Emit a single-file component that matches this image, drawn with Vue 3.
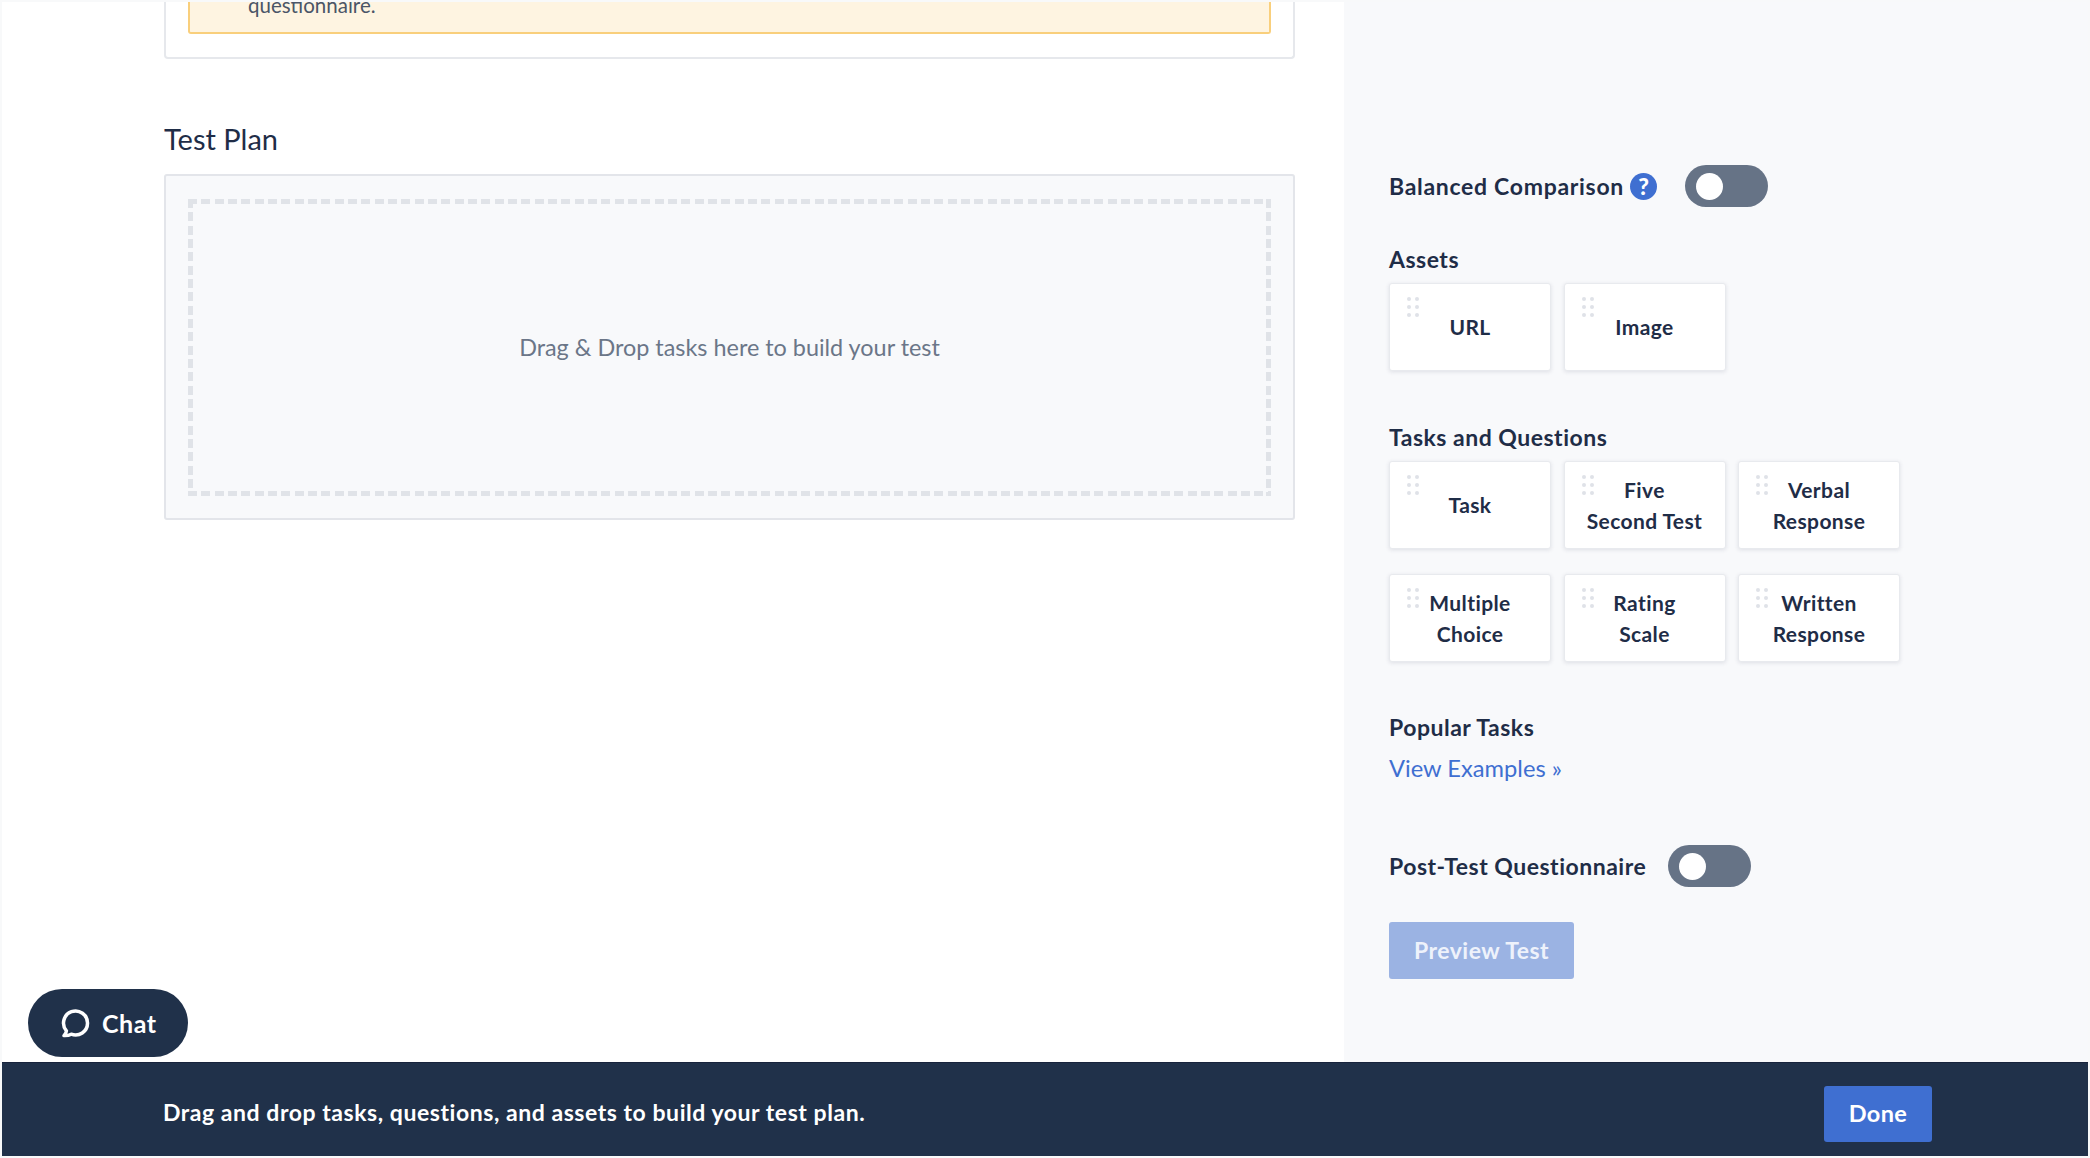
<script setup>
const assets = [['URL'], ['Image']]
const tasks = [
  ['Task'],
  ['Five', 'Second Test'],
  ['Verbal', 'Response'],
  ['Multiple', 'Choice'],
  ['Rating', 'Scale'],
  ['Written', 'Response']
]
</script>

<template>
  <div class="page">
    <div class="main">
      <section class="left">
        <div class="intro-card">
          <div class="alert"><span class="alert-text">questionnaire.</span></div>
        </div>
        <h2 class="plan-title">Test Plan</h2>
        <div class="plan-card">
          <div class="dropzone">Drag &amp; Drop tasks here to build your test</div>
        </div>
      </section>

      <aside class="side">
        <div class="toggle-row balanced">
          <span class="label">Balanced Comparison</span>
          <span class="help">?</span>
          <span class="toggle t-balanced"><i class="knob"></i></span>
        </div>

        <h3 class="label assets-title">Assets</h3>
        <div class="tiles">
          <div v-for="t in assets" :key="t[0]" class="tile">
            <span class="grip"><i v-for="n in 6" :key="n"></i></span>
            <span v-for="l in t" :key="l" class="tile-line">{{ l }}</span>
          </div>
        </div>

        <h3 class="label tasks-title">Tasks and Questions</h3>
        <div class="tiles">
          <div v-for="t in tasks" :key="t.join()" class="tile">
            <span class="grip"><i v-for="n in 6" :key="n"></i></span>
            <span v-for="l in t" :key="l" class="tile-line">{{ l }}</span>
          </div>
        </div>

        <h3 class="label popular-title">Popular Tasks</h3>
        <a class="examples">View Examples »</a>

        <div class="toggle-row post">
          <span class="label">Post-Test Questionnaire</span>
          <span class="toggle t-post"><i class="knob"></i></span>
        </div>

        <button class="preview">Preview Test</button>
      </aside>
    </div>

    <footer class="bar">
      <span class="bar-text">Drag and drop tasks, questions, and assets to build your test plan.</span>
      <button class="done">Done</button>
    </footer>

    <button class="chat">
      <svg width="32" height="32" viewBox="0 0 32 32" fill="none" stroke="#fff" stroke-width="3.500" stroke-linecap="round" stroke-linejoin="round">
        <path d="M6.400 23.800A12 12 0 1 1 11.200 27.200C9 28.400 6.500 28.700 4 28.600 5.500 27 6.300 25.500 6.400 23.800Z" />
      </svg>
      <span>Chat</span>
    </button>
  </div>
</template>

<style scoped>
.page {
  position: relative;
  box-sizing: border-box;
  width: 2090px;
  height: 1158px;
  padding: 2px;
  overflow: hidden;
  display: flex;
  flex-direction: column;
  font-family: "Lato", "Open Sans", sans-serif;
  color: #1f2d47;
  background: #f8f9fa;
}
.main {
  flex: 1;
  display: flex;
  min-height: 0;
  background: #fff;
}
.left {
  box-sizing: border-box;
  width: 1342px;
  padding-left: 162px;
}
.intro-card {
  box-sizing: border-box;
  width: 1131px;
  height: 57px;
  padding: 0 22px;
  background: #fff;
  border: 2px solid #e6e8ec;
  border-top: 0;
  border-radius: 0 0 4px 4px;
}
.alert {
  box-sizing: border-box;
  height: 32px;
  padding-left: 58px;
  background: #fef4e1;
  border: 2px solid #f9cf7c;
  border-top: 0;
  border-radius: 0 0 3px 3px;
  overflow: hidden;
}
.alert-text {
  display: block;
  margin-top: -9px;
  font-size: 20.500px;
  line-height: 24px;
  color: #4a5568;
}
.plan-title {
  margin: 45px 0 0;
  height: 70px;
  font-size: 29px;
  font-weight: 400;
  line-height: 70px;
  color: #1f2d47;
}
.plan-card {
  box-sizing: border-box;
  width: 1131px;
  height: 346px;
  padding: 23px 22px;
  background: #f8f9fb;
  border: 2px solid #e3e5ea;
  border-radius: 3px;
}
.dropzone {
  box-sizing: border-box;
  height: 297px;
  padding-bottom: 2px;
  display: flex;
  align-items: center;
  justify-content: center;
  background-image:
    repeating-linear-gradient(90deg, #e0e3e8 0 9px, transparent 9px 13.330px),
    repeating-linear-gradient(90deg, #e0e3e8 0 9px, transparent 9px 13.330px),
    repeating-linear-gradient(180deg, #e0e3e8 0 9px, transparent 9px 13.330px),
    repeating-linear-gradient(180deg, #e0e3e8 0 9px, transparent 9px 13.330px);
  background-size: 100% 5px, 100% 5px, 5px 100%, 5px 100%;
  background-position: top left, bottom left, top left, top right;
  background-repeat: no-repeat;
  font-size: 23.400px;
  color: #6b7688;
}
.side {
  flex: 1;
  box-sizing: border-box;
  padding: 0 0 0 45px;
  background: #f8f9fb;
}
.label {
  font-size: 23px;
  font-weight: 700;
  letter-spacing: 0.500px;
  color: #1f2d47;
}
h3.label {
  margin: 0;
  line-height: 28px;
}
.toggle-row {
  display: flex;
  align-items: center;
}
.balanced {
  height: 42px;
  margin-top: 163px;
}
.balanced .label {
  letter-spacing: 0.700px;
}
.help {
  flex: none;
  width: 27px;
  height: 27px;
  margin-left: 6px;
  border-radius: 50%;
  background: #3f6fd1;
  color: #fff;
  font-size: 23px;
  font-weight: 900;
  line-height: 27px;
  text-align: center;
}
.toggle {
  flex: none;
  display: flex;
  align-items: center;
  box-sizing: border-box;
  width: 83px;
  height: 42px;
  padding-left: 11px;
  border-radius: 21px;
  background: #667386;
}
.knob {
  width: 27px;
  height: 27px;
  border-radius: 50%;
  background: #fff;
}
.t-balanced { margin-left: 28px; }
.t-post { margin-left: 22px; }
.assets-title { margin-top: 38px !important; }
.tiles {
  display: grid;
  grid-template-columns: repeat(3, 162px);
  column-gap: 12.500px;
  row-gap: 25px;
  margin-top: 10px;
}
.tile {
  position: relative;
  box-sizing: border-box;
  height: 88px;
  padding-bottom: 1px;
  display: flex;
  flex-direction: column;
  align-items: center;
  justify-content: center;
  background: #fff;
  border: 1px solid #e8eaee;
  border-radius: 3px;
  box-shadow: 0 1px 4px rgba(31, 45, 71, 0.12);
}
.tile-line {
  font-size: 21px;
  font-weight: 700;
  letter-spacing: 0.400px;
  line-height: 31px;
  color: #1f2d47;
}
.grip {
  position: absolute;
  left: 17px;
  top: 13px;
  display: grid;
  grid-template-columns: repeat(2, 4px);
  column-gap: 4px;
  row-gap: 4px;
}
.grip i {
  width: 4px;
  height: 4px;
  border-radius: 50%;
  background: #dfe2e8;
}
.tasks-title { margin-top: 52px !important; }
.popular-title { margin-top: 51px !important; }
.examples {
  display: block;
  margin-top: 13px;
  font-size: 23.700px;
  line-height: 28px;
  color: #3f6fd1;
}
.post {
  height: 42px;
  margin-top: 63px;
}
button {
  border: 0;
  font-family: inherit;
}
.preview {
  display: block;
  width: 185px;
  height: 57px;
  margin-top: 35px;
  padding-bottom: 3px;
  border-radius: 3px;
  background: #9bb3e3;
  color: #eef2fb;
  font-size: 23px;
  font-weight: 700;
  letter-spacing: 0.500px;
}
.bar {
  flex: none;
  box-sizing: border-box;
  height: 94px;
  display: flex;
  align-items: center;
  justify-content: space-between;
  padding: 8px 156px 0 161px;
  background: #20314a;
  border-top: 1px solid #17233c;
}
.bar-text {
  margin-bottom: 3px;
  font-size: 23px;
  font-weight: 700;
  letter-spacing: 0.550px;
  color: #fff;
}
.done {
  width: 108px;
  height: 56px;
  padding-bottom: 2px;
  border-radius: 3px;
  background: #3f6fd1;
  color: #fff;
  font-size: 23.500px;
  font-weight: 700;
  letter-spacing: 0.400px;
}
.chat {
  position: absolute;
  left: 28px;
  top: 989px;
  width: 160px;
  height: 68px;
  display: flex;
  align-items: center;
  gap: 10px;
  padding: 0 0 0 32px;
  border-radius: 34px;
  background: #20314a;
  color: #fff;
  font-size: 25px;
  font-weight: 700;
  letter-spacing: 0.500px;
}
</style>
